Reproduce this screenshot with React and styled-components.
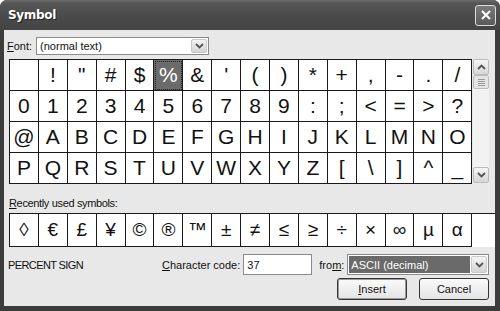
import React from "react";
import styled, { createGlobalStyle } from "styled-components";

const GlobalStyle = createGlobalStyle`
  body {
    margin: 0;
    background: #fff;
    font-family: "Liberation Sans", Arial, sans-serif;
  }
`;

const GRID_ROWS = [
  [" ", "!", '"', "#", "$", "%", "&", "'", "(", ")", "*", "+", ",", "-", ".", "/"],
  ["0", "1", "2", "3", "4", "5", "6", "7", "8", "9", ":", ";", "<", "=", ">", "?"],
  ["@", "A", "B", "C", "D", "E", "F", "G", "H", "I", "J", "K", "L", "M", "N", "O"],
  ["P", "Q", "R", "S", "T", "U", "V", "W", "X", "Y", "Z", "[", "\\", "]", "^", "_"],
];

const RECENT = ["◊", "€", "£", "¥", "©", "®", "™", "±", "≠", "≤", "≥", "÷", "×", "∞", "µ", "α"];

// Window frame
const Window = styled.div`
  width: 500px;
  height: 311px;
  display: flex;
  flex-direction: column;
  background: #3c3c3c;
  border-radius: 7px 7px 0 0;
  overflow: hidden;
`;

const TitleBar = styled.div`
  height: 30px;
  flex-shrink: 0;
  display: flex;
  align-items: center;
  justify-content: space-between;
  padding: 0 4px 0 8px;
  background: linear-gradient(#6a6a6a 0%, #555 12%, #4a4a4a 60%, #444 100%);
`;

const Title = styled.span`
  color: #fff;
  font-family: "DejaVu Sans", Verdana, sans-serif;
  font-weight: bold;
  font-size: 12px;
  letter-spacing: -0.3px;
  text-shadow: 1px 1px 0 #222;
`;

const CloseButton = styled.div`
  width: 21px;
  height: 21px;
  box-sizing: border-box;
  border: 1px solid #ddd;
  border-radius: 3px;
  background: linear-gradient(#7a7a7a, #5a5a5a);
  display: flex;
  align-items: center;
  justify-content: center;
`;

const Body = styled.div`
  flex: 1;
  margin: 0 5px 5px 4px;
  background: #e8e8e8;
  display: flex;
  flex-direction: column;
  padding: 7px 0 0 3px;
  font-size: 11px;
  color: #111;
`;

const Row = styled.div`
  display: flex;
  align-items: center;
`;

const Label = styled.span`
  font-size: 11px;
  margin-right: ${(p) => p.gap || 2}px;
  margin-left: ${(p) => p.lead || 0}px;
  white-space: nowrap;
`;

const U = styled.span`
  text-decoration: underline;
`;

// Combo box / text input
const Combo = styled.div`
  width: ${(p) => p.width}px;
  height: ${(p) => p.height || 18}px;
  box-sizing: border-box;
  border: 1px solid #8a8a8a;
  background: #fff;
  display: flex;
  align-items: center;
  padding: 1px;
`;

const ComboText = styled.div`
  flex: 1;
  height: 100%;
  display: flex;
  align-items: center;
  padding-left: 2px;
  font-size: 11px;
  background: ${(p) => (p.selected ? "#6a6a6a" : "transparent")};
  color: ${(p) => (p.selected ? "#fff" : "#111")};
`;

const ArrowButton = styled.div`
  width: 16px;
  height: 100%;
  box-sizing: border-box;
  border: 1px solid #c8c8c8;
  border-radius: 2px;
  background: linear-gradient(#f4f4f4, #d4d4d4);
  display: flex;
  align-items: center;
  justify-content: center;
  margin-left: 1px;
`;

const GridArea = styled.div`
  display: flex;
  margin-top: 4px;
`;

const CharGrid = styled.div`
  display: grid;
  grid-template-columns: repeat(16, 28.9px);
  border-top: 1px solid #1a1a1a;
  border-left: 1px solid #1a1a1a;
  background: #fff;
  margin-left: 2px;
`;

const Cell = styled.div`
  height: ${(p) => p.h}px;
  box-sizing: border-box;
  border-right: 1px solid #1a1a1a;
  border-bottom: 1px solid #1a1a1a;
  display: flex;
  align-items: center;
  justify-content: center;
  font-family: "Liberation Sans", Arial, sans-serif;
  font-size: ${(p) => p.size || 21}px;
  color: ${(p) => (p.active ? "#fff" : "#111")};
  background: ${(p) => (p.active ? "#6b6b6b" : "#fff")};
  outline: ${(p) => (p.active ? "1px dotted #222" : "none")};
  outline-offset: -2px;
`;

const ScrollBar = styled.div`
  width: 16px;
  height: 124px;
  margin-left: 1px;
  display: flex;
  flex-direction: column;
  justify-content: space-between;
  background: #f2f2f2;
`;

const ScrollBtn = styled.div`
  height: 16px;
  box-sizing: border-box;
  border: 1px solid #bbb;
  border-radius: 2px;
  background: linear-gradient(#f6f6f6, #d6d6d6);
  display: flex;
  align-items: center;
  justify-content: center;
`;

const Thumb = styled.div`
  height: 14px;
  box-sizing: border-box;
  border: 1px solid #bbb;
  border-radius: 2px;
  background: #e4e4e4;
  display: flex;
  flex-direction: column;
  align-items: center;
  justify-content: center;
  gap: 1px;
  span {
    display: block;
    width: 7px;
    height: 1px;
    background: #999;
  }
`;

const ScrollTrack = styled.div`
  flex: 1;
  display: flex;
  flex-direction: column;
`;

const RecentLabel = styled.div`
  margin: 13px 0 4px 2px;
  font-size: 11px;
  letter-spacing: -0.35px;
`;

const Bottom = styled.div`
  display: flex;
  align-items: center;
  margin-top: 7px;
  padding-left: 1px;
`;

const CharName = styled.span`
  font-size: 11px;
  letter-spacing: -0.6px;
  width: 154px;
`;

const Buttons = styled.div`
  display: flex;
  justify-content: flex-end;
  gap: 12px;
  margin: 3px 6px 0 0;
`;

const Button = styled.div`
  width: 70px;
  height: 22px;
  box-sizing: border-box;
  border: 1px solid #333;
  border-radius: 3px;
  background: linear-gradient(#fafafa, #e4e4e4);
  box-shadow: ${(p) => (p.primary ? "inset 0 0 0 1px #9a9a9a" : "none")};
  display: flex;
  align-items: center;
  justify-content: center;
  font-size: 11px;
`;

const Chevron = ({ up }) => (
  <svg width="9" height="6" viewBox="0 0 9 6">
    <path
      d={up ? "M1 5 L4.5 1.5 L8 5" : "M1 1 L4.5 4.5 L8 1"}
      stroke="#555"
      strokeWidth="1.8"
      fill="none"
    />
  </svg>
);

export default function App() {
  return (
    <>
      <GlobalStyle />
      <Window>
        <TitleBar>
          <Title>Symbol</Title>
          <CloseButton>
            <svg width="12" height="12" viewBox="0 0 12 12">
              <path d="M2 2 L10 10 M10 2 L2 10" stroke="#fff" strokeWidth="2" />
            </svg>
          </CloseButton>
        </TitleBar>
        <Body>
          <Row>
            <Label gap={4}>
              <U>F</U>ont:
            </Label>
            <Combo width={173}>
              <ComboText>(normal text)</ComboText>
              <ArrowButton>
                <Chevron />
              </ArrowButton>
            </Combo>
          </Row>

          <GridArea>
            <CharGrid>
              {GRID_ROWS.flat().map((ch, i) => (
                <Cell key={i} h={31} active={ch === "%"}>
                  {ch}
                </Cell>
              ))}
            </CharGrid>
            <ScrollBar>
              <ScrollTrack>
                <ScrollBtn>
                  <Chevron up />
                </ScrollBtn>
                <Thumb>
                  <span />
                  <span />
                  <span />
                  <span />
                </Thumb>
              </ScrollTrack>
              <ScrollBtn>
                <Chevron />
              </ScrollBtn>
            </ScrollBar>
          </GridArea>

          <RecentLabel>
            <U>R</U>ecently used symbols:
          </RecentLabel>
          <CharGrid>
            {RECENT.map((ch, i) => (
              <Cell key={i} h={33} size={19}>
                {ch}
              </Cell>
            ))}
          </CharGrid>

          <Bottom>
            <CharName>PERCENT SIGN</CharName>
            <Label gap={3}>
              <U>C</U>haracter code:
            </Label>
            <Combo width={69} height={21}>
              <ComboText>37</ComboText>
            </Combo>
            <Label gap={3} lead={7}>
              fro<U>m</U>:
            </Label>
            <Combo width={142} height={21}>
              <ComboText selected>ASCII (decimal)</ComboText>
              <ArrowButton>
                <Chevron />
              </ArrowButton>
            </Combo>
          </Bottom>
          <Buttons>
            <Button primary>
              <U>I</U>nsert
            </Button>
            <Button>Cancel</Button>
          </Buttons>
        </Body>
      </Window>
    </>
  );
}
